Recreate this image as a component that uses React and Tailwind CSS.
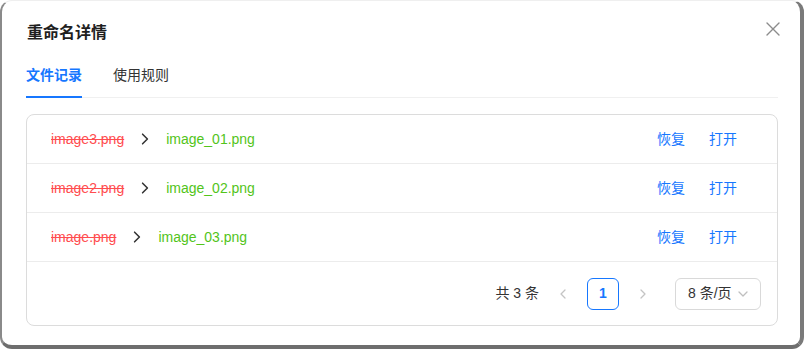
const rows = [
  { from: 'image3.png', to: 'image_01.png' },
  { from: 'image2.png', to: 'image_02.png' },
  { from: 'image.png', to: 'image_03.png' },
];

const font = { fontFamily: '"Liberation Sans", "Noto Sans CJK SC", sans-serif' };

const Chevron = ({ dir = 'right', color = '#333', size = 10 }) => {
  const points = {
    right: '3,1 7,5 3,9',
    left: '7,1 3,5 7,9',
    down: '1,3 5,7 9,3',
  }[dir];
  return (
    <svg width={size} height={size} viewBox="0 0 10 10" fill="none">
      <polyline points={points} stroke={color} strokeWidth="1.3" strokeLinecap="round" strokeLinejoin="round" />
    </svg>
  );
};

export default function App() {
  return (
    <div className="w-[804px] h-[349px] bg-white overflow-hidden" style={font}>
      <div className="h-full rounded-[12px] border-t border-l-2 border-r-4 border-b-4 border-t-[#efefef] border-l-[#8a8a8a] border-r-[#7a7a7a] border-b-[#6e6e6e] bg-white pt-[20px]">
        {/* Header */}
        <div className="flex items-center justify-between pl-[25px] pr-[20px]">
          <h2 className="text-[16px] leading-[24px] font-semibold text-[#1f1f1f]">重命名详情</h2>
          <svg width="14" height="14" viewBox="0 0 14 14" className="-mt-[8px]">
            <path d="M1 1 L13 13 M13 1 L1 13" stroke="#8c8c8c" strokeWidth="1.4" strokeLinecap="round" />
          </svg>
        </div>

        {/* Tabs */}
        <div className="mt-[7px] ml-[24px] mr-[22px] flex gap-[31px] border-b border-[#f0f0f0]">
          <div className="pt-[12px] pb-[10px] -mb-px border-b-2 border-[#1677ff] text-[14px] leading-[22px] font-semibold text-[#1677ff]">
            文件记录
          </div>
          <div className="pt-[12px] pb-[10px] text-[14px] leading-[22px] text-[#333]">使用规则</div>
        </div>

        {/* Record list */}
        <div className="mt-[16px] ml-[24px] mr-[22px] rounded-lg border border-[#dcdcdc]">
          {rows.map((r) => (
            <div key={r.from} className="flex h-[49px] items-center justify-between border-b border-[#ececec] pl-[24px] pr-[40px] text-[14px]">
              <div className="flex items-center gap-[15px]">
                <span className="text-[#ff4d4f] line-through">{r.from}</span>
                <Chevron color="#333" size={12} />
                <span className="text-[#52c41a]">{r.to}</span>
              </div>
              <div className="flex gap-[24px] text-[#1677ff]">
                <span>恢复</span>
                <span>打开</span>
              </div>
            </div>
          ))}

          {/* Pagination */}
          <div className="flex h-[63px] items-center justify-end pr-[16px] text-[14px] text-[#333]">
            <span className="mr-[8px]">共 3 条</span>
            <div className="flex h-[32px] w-[32px] items-center justify-center">
              <Chevron dir="left" color="#c4c4c4" />
            </div>
            <div className="mx-[8px] flex h-[32px] w-[32px] items-center justify-center rounded-md border border-[#1677ff] font-semibold text-[#1677ff]">
              1
            </div>
            <div className="flex h-[32px] w-[32px] items-center justify-center">
              <Chevron dir="right" color="#c4c4c4" />
            </div>
            <div className="ml-[16px] flex h-[32px] w-[86px] items-center justify-between rounded-md border border-[#d9d9d9] pl-[12px] pr-[12px]">
              <span>8 条/页</span>
              <Chevron dir="down" color="#bfbfbf" />
            </div>
          </div>
        </div>
      </div>
    </div>
  );
}
